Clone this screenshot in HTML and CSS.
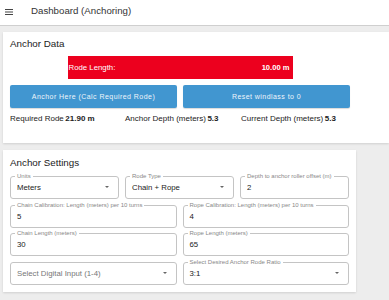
FILE: index.html
```html
<!DOCTYPE html>
<html>
<head>
<meta charset="utf-8">
<link rel="stylesheet" href="styles.css">
</head>
<body>
<header class="topbar">
  <svg class="menu" width="8" height="6" viewBox="0 0 8 6"><rect x="0" y="0" width="8" height="1" fill="#444"/><rect x="0" y="2.5" width="8" height="1" fill="#444"/><rect x="0" y="5" width="8" height="1" fill="#444"/></svg>
  <span class="title">Dashboard (Anchoring)</span>
</header>
<main class="page">
  <section class="card card-data">
    <h2 class="card-title">Anchor Data</h2>
    <div class="rode-bar"><span>Rode Length:</span><b>10.00 m</b></div>
    <div class="buttons">
      <button class="btn">Anchor Here (Calc Required Rode)</button>
      <button class="btn">Reset windlass to 0</button>
    </div>
    <div class="stats">
      <div class="stat">Required Rode<b>21.90 m</b></div>
      <div class="stat">Anchor Depth (meters)<b>5.3</b></div>
      <div class="stat">Current Depth (meters)<b>5.3</b></div>
    </div>
  </section>
  <section class="card card-settings">
    <h2 class="card-title">Anchor Settings</h2>
    <div class="row three">
      <div class="field select"><span class="label">Units</span><span class="value">Meters</span><i class="arrow"></i></div>
      <div class="field select"><span class="label">Rode Type</span><span class="value">Chain + Rope</span><i class="arrow"></i></div>
      <div class="field"><span class="label">Depth to anchor roller offset (m)</span><span class="value">2</span></div>
    </div>
    <div class="row two">
      <div class="field"><span class="label">Chain Calibration: Length (meters) per 10 turns</span><span class="value">5</span></div>
      <div class="field"><span class="label">Rope Calibration: Length (meters) per 10 turns</span><span class="value">4</span></div>
    </div>
    <div class="row two">
      <div class="field"><span class="label">Chain Length (meters)</span><span class="value">30</span></div>
      <div class="field"><span class="label">Rope Length (meters)</span><span class="value">65</span></div>
    </div>
    <div class="row two">
      <div class="field select"><span class="value placeholder">Select Digital Input (1-4)</span><i class="arrow"></i></div>
      <div class="field select"><span class="label">Select Desired Anchor Rode Ratio</span><span class="value">3:1</span><i class="arrow"></i></div>
    </div>
  </section>
</main>
</body>
</html>
```
FILE: styles.css
```css
* { box-sizing: border-box; }
html, body { margin: 0; padding: 0; }
body {
  background: #ededed;
  font-family: "Liberation Sans", Arial, sans-serif;
  color: #222;
  overflow: hidden;
  width: 389px;
  height: 300px;
}
.topbar {
  height: 26px;
  background: #fff;
  border-bottom: 1px solid #cfcfcf;
  display: flex;
  align-items: flex-start;
  padding: 5px 0 0 5px;
}
.menu { display: block; margin-top: 4px; }
.title {
  margin-left: 18px;
  font-size: 9.7px;
  line-height: 11px;
  color: #333;
}
.page {
  padding: 6px 0 0 3px;
  display: flex;
  flex-direction: column;
  gap: 7px;
}
.card {
  background: #fff;
  box-shadow: 0 1px 2px rgba(0,0,0,0.12);
  padding: 0 7px;
}
.card-data {
  height: 111px;
  padding-right: 39px;
}
.card-settings {
  width: 353px;
  height: 142px;
  padding-right: 7px;
}
.card-title {
  margin: 0;
  font-weight: 400;
  font-size: 9.8px;
  line-height: 14px;
  padding-top: 5px;
  color: #222;
}
.card-settings .card-title { padding-top: 6px; padding-bottom: 6px; }
.rode-bar {
  width: 225px;
  height: 23px;
  margin: 5px auto 0;
  background: #ec001e;
  color: #fff;
  display: flex;
  justify-content: space-between;
  align-items: center;
  padding: 0 3px 0 1px;
  font-size: 7.8px;
}
.rode-bar b { font-weight: 700; font-size: 7.6px; }
.buttons {
  display: grid;
  grid-template-columns: 1fr 1fr;
  gap: 6px;
  margin-top: 6px;
}
.btn {
  height: 23px;
  border: 0;
  border-radius: 2px;
  background: #4196d0;
  color: #eef5fb;
  font-family: inherit;
  font-size: 7px;
  letter-spacing: 0.45px;
  box-shadow: 0 1px 1px rgba(0,0,0,0.15);
  padding: 0;
}
.stats {
  display: grid;
  grid-template-columns: 115px 116px 1fr;
  margin-top: 5px;
  font-size: 8px;
  line-height: 11px;
}
.stat b { font-weight: 700; margin-left: 1.5px; }
.row {
  display: grid;
  gap: 6px;
  margin-bottom: 5.5px;
}
.row.three { grid-template-columns: 1fr 1fr 1fr; }
.row.two { grid-template-columns: 1fr 1fr; }
.field {
  position: relative;
  height: 23px;
  border: 1px solid #c4c4c4;
  border-radius: 3px;
  display: flex;
  align-items: center;
  padding-left: 6px;
}
.label {
  position: absolute;
  left: 4px;
  top: -5px;
  font-size: 6px;
  line-height: 8px;
  color: #888;
  background: #fff;
  padding: 0 2px;
  white-space: nowrap;
}
.value {
  font-size: 7.8px;
  color: #222;
}
.value.placeholder { color: #777; }
.arrow {
  position: absolute;
  right: 9px;
  top: 9px;
  width: 0;
  height: 0;
  border-left: 2.5px solid transparent;
  border-right: 2.5px solid transparent;
  border-top: 2.5px solid #666;
}
```
